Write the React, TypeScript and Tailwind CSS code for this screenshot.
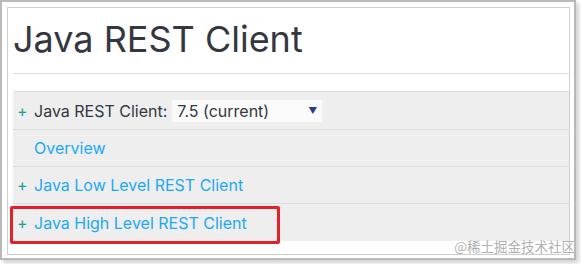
import React from "react";

const font = { fontFamily: "Inter, 'Noto Sans', sans-serif" };

function Plus() {
  return <span className="w-[16px] text-[#21a291] text-[16px] leading-none pl-[4px]">+</span>;
}

export default function App() {
  return (
    <div className="w-[581px] h-[264px] bg-white relative" style={font}>
      <div className="w-[576px] h-[260px] border-2 border-[#b9b9b9] shadow-[3px_3px_4px_rgba(0,0,0,0.18)] pt-[5px] pl-[5px]">
        <div className="w-[563px] h-[248px] border border-[#cfcfcf] bg-white pl-[5px] flex flex-col">
          <h1 className="text-[36px] leading-[40px] text-[#343741] pt-[11px] pb-[14px] border-b border-[#dddddd]">
            Java REST Client
          </h1>
          <div className="mt-[17px] bg-[#eeeeee] border-t border-[#dddddd] flex flex-col text-[16px]">
            <div className="h-[38px] flex items-center border-b border-[#dddddd]">
              <Plus />
              <span className="text-[#343741] ml-[5px]">Java REST Client:</span>
              <div className="ml-[5px] w-[150px] h-[22px] bg-[#fafafa] flex items-center justify-between pl-[5px] pr-[3px]">
                <span className="text-[#343741]">7.5 (current)</span>
                <span className="text-[#2c3a8c] text-[9px] mr-[2px]">▼</span>
              </div>
            </div>
            <div className="h-[37px] flex items-center border-b border-[#dddddd] pl-[21px] text-[#1ba9f5]">
              Overview
            </div>
            <div className="h-[37px] flex items-center border-b border-[#dddddd]">
              <Plus />
              <span className="text-[#1ba9f5] ml-[5px]">Java Low Level REST Client</span>
            </div>
            <div className="h-[37px] flex items-center relative">
              <Plus />
              <span className="text-[#1ba9f5] ml-[5px]">Java High Level REST Client</span>
              <div className="absolute left-[-3px] top-[2px] w-[270px] h-[38px] border-[3px] border-[#e5202b] rounded-[2px]" />
            </div>
          </div>
        </div>
      </div>
      <div className="absolute right-[6px] top-[236px] text-[13.5px] text-[#b0b0b0]" style={{ fontFamily: "'Noto Sans CJK SC', sans-serif" }}>
        @稀土掘金技术社区
      </div>
    </div>
  );
}
